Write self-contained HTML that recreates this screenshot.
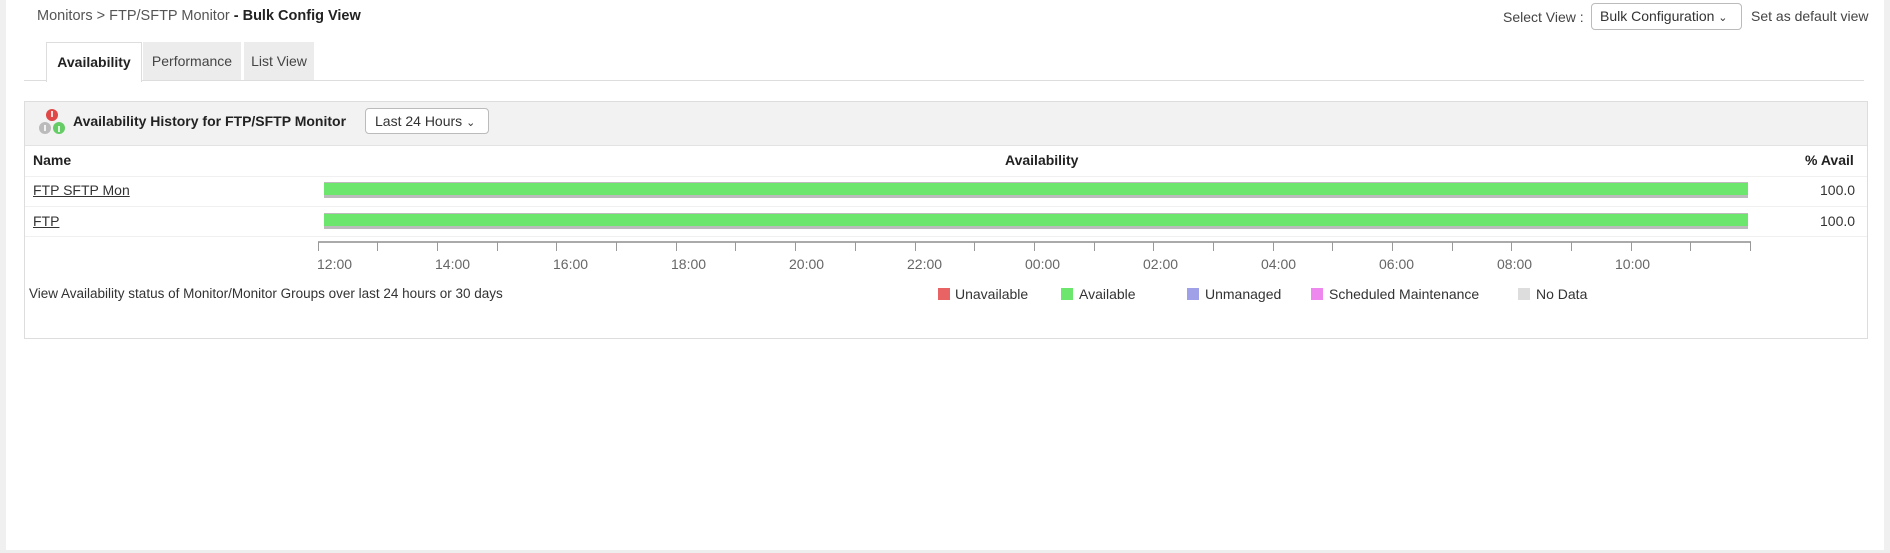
<!DOCTYPE html>
<html><head><meta charset="utf-8"><style>
body{margin:0;width:1890px;height:553px;background:#fff;font-family:"Liberation Sans",sans-serif;color:#333;position:relative;overflow:hidden;font-size:14px}
.a{position:absolute}
.tab{position:absolute;top:42px;height:38px;background:#ececec;line-height:38px;text-align:center;font-size:14px;color:#444}
.bar{position:absolute;left:324px;width:1424px;height:12px;background:#6ce66c;border-bottom:3px solid #bbb;border-top:1px solid #bbb}
.lg{position:absolute;top:288px;width:12px;height:12px}
.lt{position:absolute;top:286px;font-size:14px;color:#333}
.tick{position:absolute;top:242px;width:1px;height:9px;background:#999}
.tl{position:absolute;top:256px;font-size:14px;color:#666}
</style></head><body>
<div class="a" style="left:0;top:0;width:6px;height:553px;background:#f0f0f0"></div>
<div class="a" style="left:1884px;top:0;width:6px;height:553px;background:#f0f0f0"></div>
<div class="a" style="left:0;top:550px;width:1890px;height:3px;background:#eee"></div>
<div class="a" style="left:37px;top:8px;font-size:14.5px;color:#555">Monitors &gt; FTP/SFTP Monitor <b style="color:#222">- Bulk Config View</b></div>
<div class="a" style="left:1503px;top:9px;font-size:14px;color:#444">Select View :</div>
<div class="a" style="left:1591px;top:3px;height:25px;border:1px solid #bbb;border-radius:4px;font-size:14px;line-height:25px;padding-left:8px;width:141px">Bulk Configuration <span style="font-size:11px">&#8964;</span></div>
<div class="a" style="left:1751px;top:8px;font-size:14px;color:#444">Set as default view</div>
<div class="a" style="left:24px;top:80px;width:1840px;height:1px;background:#ddd"></div>
<div class="tab" style="left:46px;width:94px;background:#fff;border:1px solid #ddd;border-bottom:none;font-weight:bold;color:#222;height:39px">Availability</div>
<div class="tab" style="left:143px;width:98px">Performance</div>
<div class="tab" style="left:244px;width:70px">List View</div>
<div class="a" style="left:24px;top:101px;width:1842px;height:236px;border:1px solid #ddd"></div>
<div class="a" style="left:25px;top:102px;width:1842px;height:43px;background:#f2f2f2;border-bottom:1px solid #e3e3e3"></div>
<svg class="a" style="left:38px;top:108px" width="28" height="28"><circle cx="14" cy="7" r="6" fill="#e04848"/><circle cx="7" cy="20" r="6" fill="#bbb"/><circle cx="21" cy="20" r="6" fill="#6c6"/><path d="M14 3v6M7 17v6M21 24v-6" stroke="#fff" stroke-width="1.6"/></svg>
<div class="a" style="left:73px;top:113px;font-weight:bold;font-size:14px;color:#222">Availability History for FTP/SFTP Monitor</div>
<div class="a" style="left:365px;top:108px;border:1px solid #bbb;border-radius:4px;background:#fff;font-size:14px;line-height:25px;padding-left:9px;box-sizing:border-box;width:124px;height:26px">Last 24 Hours <span style="font-size:11px">&#8964;</span></div>
<div class="a" style="left:33px;top:152px;font-weight:bold;color:#222">Name</div>
<div class="a" style="left:1005px;top:152px;font-weight:bold;color:#222">Availability</div>
<div class="a" style="left:1805px;top:152px;font-weight:bold;color:#222">% Avail</div>
<div class="a" style="left:25px;top:176px;width:1842px;height:1px;background:#f0f0f0"></div>
<div class="a" style="left:25px;top:206px;width:1842px;height:1px;background:#f0f0f0"></div>
<div class="a" style="left:25px;top:236px;width:1842px;height:1px;background:#f0f0f0"></div>
<div class="a" style="left:33px;top:182px;text-decoration:underline;color:#333">FTP SFTP Mon</div>
<div class="a" style="left:33px;top:213px;text-decoration:underline;color:#333">FTP</div>
<div class="bar" style="top:182px"></div>
<div class="bar" style="top:213px"></div>
<div class="a" style="left:1820px;top:182px">100.0</div>
<div class="a" style="left:1820px;top:213px">100.0</div>
<div class="a" style="left:318px;top:241px;width:1433px;height:2px;background:#aaa"></div>
<div class="tick" style="left:318px"></div><div class="tick" style="left:377px"></div><div class="tick" style="left:437px"></div><div class="tick" style="left:497px"></div><div class="tick" style="left:556px"></div><div class="tick" style="left:616px"></div><div class="tick" style="left:676px"></div><div class="tick" style="left:735px"></div><div class="tick" style="left:795px"></div><div class="tick" style="left:855px"></div><div class="tick" style="left:915px"></div><div class="tick" style="left:974px"></div><div class="tick" style="left:1034px"></div><div class="tick" style="left:1094px"></div><div class="tick" style="left:1153px"></div><div class="tick" style="left:1213px"></div><div class="tick" style="left:1273px"></div><div class="tick" style="left:1332px"></div><div class="tick" style="left:1392px"></div><div class="tick" style="left:1452px"></div><div class="tick" style="left:1511px"></div><div class="tick" style="left:1571px"></div><div class="tick" style="left:1631px"></div><div class="tick" style="left:1690px"></div><div class="tick" style="left:1750px"></div>
<div class="tl" style="left:317px">12:00</div><div class="tl" style="left:435px">14:00</div><div class="tl" style="left:553px">16:00</div><div class="tl" style="left:671px">18:00</div><div class="tl" style="left:789px">20:00</div><div class="tl" style="left:907px">22:00</div><div class="tl" style="left:1025px">00:00</div><div class="tl" style="left:1143px">02:00</div><div class="tl" style="left:1261px">04:00</div><div class="tl" style="left:1379px">06:00</div><div class="tl" style="left:1497px">08:00</div><div class="tl" style="left:1615px">10:00</div>
<div class="a" style="left:29px;top:286px;font-size:13.5px">View Availability status of Monitor/Monitor Groups over last 24 hours or 30 days</div>
<div class="lg" style="left:938px;background:#e86464"></div><div class="lt" style="left:955px">Unavailable</div>
<div class="lg" style="left:1061px;background:#6ce66c"></div><div class="lt" style="left:1079px">Available</div>
<div class="lg" style="left:1187px;background:#a0a0e8"></div><div class="lt" style="left:1205px">Unmanaged</div>
<div class="lg" style="left:1311px;background:#ee88ee"></div><div class="lt" style="left:1329px">Scheduled Maintenance</div>
<div class="lg" style="left:1518px;background:#ddd"></div><div class="lt" style="left:1536px">No Data</div>
</body></html>
